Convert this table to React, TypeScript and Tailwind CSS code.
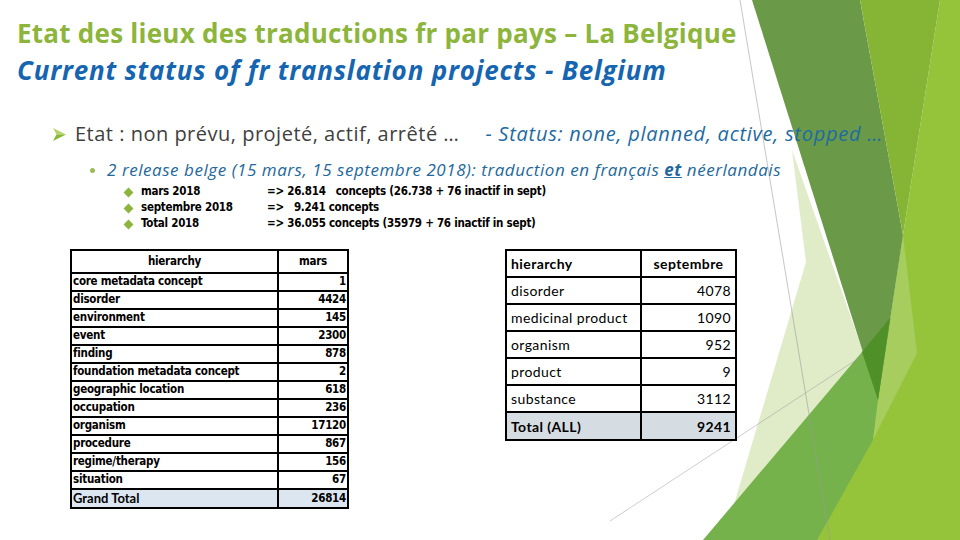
import React from 'react';

const sans = "font-['Open_Sans','Lato',sans-serif]";
const lato = "font-['Lato','Open_Sans',sans-serif]";
const narrow = "font-['Liberation_Sans_Narrow','DejaVu_Sans_Condensed','Liberation_Sans',sans-serif]";

const marsRows: [string, string][] = [
  ['core metadata concept', '1'],
  ['disorder', '4424'],
  ['environment', '145'],
  ['event', '2300'],
  ['finding', '878'],
  ['foundation metadata concept', '2'],
  ['geographic location', '618'],
  ['occupation', '236'],
  ['organism', '17120'],
  ['procedure', '867'],
  ['regime/therapy', '156'],
  ['situation', '67'],
];

const septRows: [string, string][] = [
  ['disorder', '4078'],
  ['medicinal product', '1090'],
  ['organism', '952'],
  ['product', '9'],
  ['substance', '3112'],
];

const releases = [
  { label: 'mars 2018', text: '=> 26.814   concepts (26.738 + 76 inactif in sept)' },
  { label: 'septembre 2018', text: '=>   9.241 concepts' },
  { label: 'Total 2018', text: '=> 36.055 concepts (35979 + 76 inactif in sept)' },
];

const Facets = () => (
  <svg className="absolute inset-0" width="960" height="540" viewBox="0 0 960 540">
    <polygon points="792,150 880,400 722,545 806,262" fill="#e0ebc8" />
    <polygon points="703,540 862,352 960,235 960,540" fill="#76b24c" />
    <polygon points="817,540 873,440 903,235 940,0 960,0 960,540" fill="#95c43a" />
    <polygon points="903,235 917,353 873,440 878,400" fill="#a6cd5e" />
    <polygon points="752,0 860,0 903,235 878,400" fill="#6a9a48" />
    <polygon points="860,0 940,0 903,235" fill="#86b434" />
    <polygon points="862,352 890,318 878,400" fill="#4f9028" />
    <line x1="740" y1="0" x2="830" y2="540" stroke="#9a9a9a" strokeWidth="0.8" opacity="0.7" />
    <line x1="610" y1="521" x2="862" y2="356" stroke="#9a9a9a" strokeWidth="0.8" opacity="0.6" />
  </svg>
);

const Arrow = () => (
  <svg width="13" height="13" viewBox="0 0 13 13" className="shrink-0">
    <polygon points="0,0 13,6.5 3.5,6.5" fill="#b6d36c" />
    <polygon points="3.5,6.5 13,6.5 0,13" fill="#86b836" />
  </svg>
);

export default function App() {
  return (
    <div className="relative w-[960px] h-[540px] overflow-hidden bg-white">
      <Facets />
      <div className="relative pl-[17px] pt-[15px]">
        <h1 className={`${sans} font-bold text-[26px] leading-[37px] text-[#8db53c] tracking-[0.25px] whitespace-nowrap`}>
          Etat des lieux des traductions fr par pays – La Belgique
        </h1>
        <h2 className={`${sans} font-bold italic text-[26px] leading-[37px] text-[#1565b0] tracking-[0.8px] whitespace-nowrap`}>
          Current status of fr translation projects - Belgium
        </h2>

        <div className="mt-[31px] ml-[36px] flex items-center h-[28px]">
          <Arrow />
          <span className={`${sans} ml-[9px] text-[20px] text-[#404040] tracking-[0.5px] whitespace-nowrap`}>
            Etat : non prévu, projeté, actif, arrêté …
          </span>
          <span className={`${sans} ml-[26px] text-[20px] italic text-[#1f6aa3] tracking-[0.75px] whitespace-nowrap`}>
            - Status: none, planned, active, stopped …
          </span>
        </div>

        <div className="mt-[10px] ml-[73px] flex items-center h-[24px]">
          <span className="w-[5px] h-[5px] rounded-full bg-[#9bbb59] shrink-0" />
          <span className={`${sans} ml-[12px] text-[17px] italic text-[#23689b] whitespace-nowrap tracking-[0.55px]`}>
            2 release belge (15 mars, 15 septembre 2018): traduction en français <b className="underline">et</b> néerlandais
          </span>
        </div>

        <div className="mt-[2px] ml-[108px] flex flex-col">
          {releases.map((r) => (
            <div key={r.label} className={`${narrow} flex items-center h-[16px] text-[11.5px] tracking-[-0.25px] font-bold text-black`}>
              <span className="w-[7px] h-[7px] rotate-45 bg-[#8db53e] shrink-0" />
              <span className="ml-[9px] w-[126px]">{r.label}</span>
              <span className="whitespace-pre">{r.text}</span>
            </div>
          ))}
        </div>

        <div className="mt-[17px] flex items-start">
          <div className={`${narrow} ml-[53px] w-[279px] border-2 border-black text-[11.5px] tracking-[-0.25px] font-bold text-black`}>
            <div className="grid grid-cols-[207px_1fr] h-[23px] border-b-2 border-black">
              <div className="border-r-2 border-black flex items-center justify-center">hierarchy</div>
              <div className="flex items-center justify-center">mars</div>
            </div>
            {marsRows.map(([k, v]) => (
              <div key={k} className="grid grid-cols-[207px_1fr] h-[18px] border-b-2 border-black">
                <div className="border-r-2 border-black flex items-center pl-[1px] leading-none">{k}</div>
                <div className="flex items-center justify-end pr-[1px] leading-none">{v}</div>
              </div>
            ))}
            <div className="grid grid-cols-[207px_1fr] h-[17px] bg-[#dce6f1]">
              <div className={`${lato} border-r-2 border-black flex items-center pl-[1px] text-[13px] tracking-normal leading-none`}>Grand Total</div>
              <div className="flex items-center justify-end pr-[1px] leading-none">26814</div>
            </div>
          </div>

          <div className={`${lato} ml-[156px] w-[232px] border-2 border-black text-[14px] text-black tracking-[0.4px]`}>
            <div className="grid grid-cols-[135px_1fr] h-[27px] border-b-2 border-black font-bold">
              <div className="border-r-2 border-black flex items-center pl-[4px]">hierarchy</div>
              <div className="flex items-center justify-center">septembre</div>
            </div>
            {septRows.map(([k, v]) => (
              <div key={k} className="grid grid-cols-[135px_1fr] h-[27px] border-b-2 border-black">
                <div className="border-r-2 border-black flex items-center pl-[4px]">{k}</div>
                <div className="flex items-center justify-end pr-[4px]">{v}</div>
              </div>
            ))}
            <div className="grid grid-cols-[135px_1fr] h-[26px] bg-[#d5dde3] font-bold">
              <div className="border-r-2 border-black flex items-center pl-[4px]">Total (ALL)</div>
              <div className="flex items-center justify-end pr-[4px]">9241</div>
            </div>
          </div>
        </div>
      </div>
    </div>
  );
}
